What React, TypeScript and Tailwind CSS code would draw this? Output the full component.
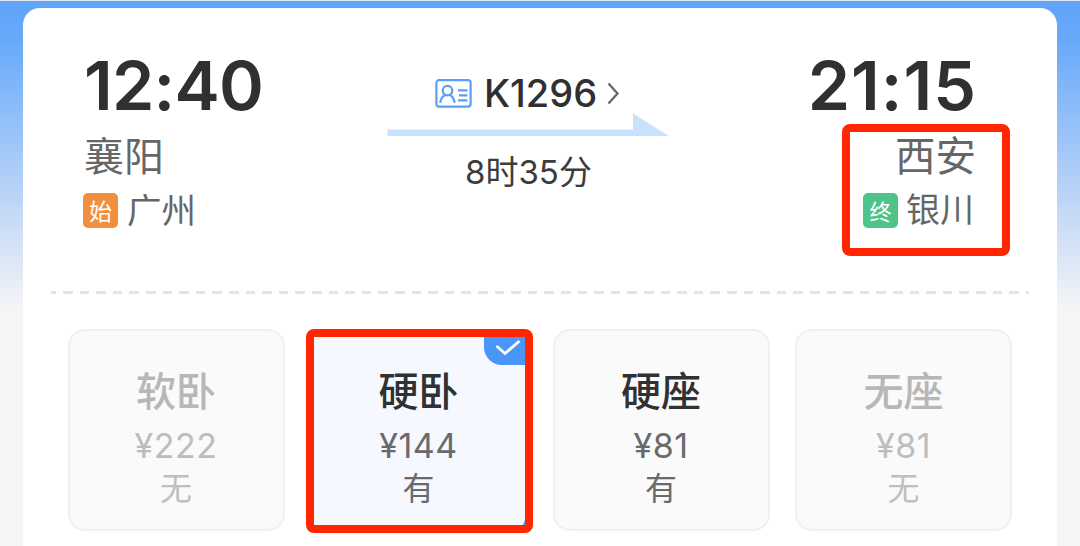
import React from "react";
import clsx from "clsx";

const cjk = "font-['Noto_Sans_CJK_SC',sans-serif]";

type Seat = {
  name: string;
  price: string;
  status: string;
  disabled?: boolean;
  selected?: boolean;
};

const seats: Seat[] = [
  { name: "软卧", price: "¥222", status: "无", disabled: true },
  { name: "硬卧", price: "¥144", status: "有", selected: true },
  { name: "硬座", price: "¥81", status: "有" },
  { name: "无座", price: "¥81", status: "无", disabled: true },
];

const IdCardIcon: React.FC = () => (
  <svg width="37" height="29" viewBox="0 0 37 29" fill="none" stroke="#589ff5" strokeWidth="2.2">
    <rect x="1.4" y="1.2" width="34.2" height="26.4" rx="2.5" />
    <circle cx="12.5" cy="11.6" r="4.8" />
    <path d="M5.2 23.8C5.8 19.5 7.8 17.2 10 16M15 16C17.2 17.2 19 19.5 19.6 23.8" />
    <path d="M23 11.4h9.4M24 16.4h8.4M23 21.4h9.4" />
  </svg>
);

const Arrow: React.FC = () => (
  <svg className="-mt-[2px] shrink-0" width="283" height="24" viewBox="0 0 283 24">
    <path d="M0.5 16.5H246V0.5L282 23H0.5Z" fill="#c8e1fd" />
  </svg>
);

const SeatCard: React.FC<{ seat: Seat }> = ({ seat }) => (
  <div
    className={clsx(
      "relative flex h-[202px] w-[217px] flex-col items-center border-2 pt-[29px]",
      seat.selected
        ? "rounded-[13px] border-[#5ba2f8] bg-[#f5f8ff]"
        : "rounded-[17px] border-[#f0f0f0] bg-[#fafafa]"
    )}
  >
    <div
      className={clsx(
        cjk,
        "h-[58px] text-[40px] leading-[58px] font-medium",
        seat.disabled ? "text-[#b7b7b7]" : "text-[#303133]"
      )}
    >
      {seat.name}
    </div>
    <div
      className={clsx(
        "mt-[6px] h-[44px] text-[34px] leading-[44px] tracking-[0.5px]",
        seat.disabled ? "text-[#bdbdbd]" : "text-[#6a6a6c]"
      )}
    >
      {seat.price}
    </div>
    <div
      className={clsx(
        cjk,
        "-mt-[4px] h-[44px] text-[32px] leading-[44px]",
        seat.disabled ? "text-[#bfbfbf]" : "text-[#6a6a6c]"
      )}
    >
      {seat.status}
    </div>

    {seat.selected && (
      <>
        <div className="absolute top-0 right-0 h-[34px] w-[41px] rounded-bl-[18px] bg-[#4a96f8]">
          <svg className="absolute top-[8px] left-[11px]" width="26" height="17" viewBox="0 0 26 17" fill="none">
            <path d="M1.5 7L10 14.5L24.5 2" stroke="#fff" strokeWidth="2.8" />
          </svg>
        </div>
        {/* red marker */}
        <div className="absolute -top-[2px] -left-[6px] h-[204px] w-[227px] rounded-[8px] border-8 border-[#ff2600]" />
      </>
    )}
  </div>
);

const App: React.FC = () => {
  return (
    <main className="h-[546px] w-[1080px] overflow-hidden border-t border-[#dfeaf7] bg-[linear-gradient(to_bottom,#5fa4fa_0px,#68aafa_40px,#8dbdf9_110px,#b8d3f7_190px,#dde7f6_260px,#f5f5f6_310px,#f5f5f5_546px)] font-['Inter',sans-serif]">
      <section className="mx-[23px] mt-[7px] h-[538px] rounded-t-[17px] bg-white">
        <header className="flex h-[282px] justify-between px-[60px] pt-[43px]">
          <div className="w-[250px]">
            <div className="h-[69px] pl-px text-[68px] leading-[69px] font-semibold tracking-[-0.8px] text-[#303030]">
              12:40
            </div>
            <div className={clsx(cjk, "mt-[8px] h-[52px] pl-px text-[40px] leading-[52px] text-[#666]")}>襄阳</div>
            <div className="mt-px flex h-[50px] items-center">
              <span className={clsx(cjk, "mt-[9px] flex size-[35px] items-center justify-center rounded-[5px] bg-[#f28f3f] text-[23px] leading-[35px] text-white")}>
                始
              </span>
              <span className={clsx(cjk, "mt-[3px] ml-[9px] text-[34.5px] leading-[50px] text-[#666]")}>广州</span>
            </div>
          </div>

          <div className="-ml-[13px] flex w-[283px] flex-col items-center pt-[20px]">
            <div className="flex h-[44px] items-center pr-[2px]">
              <IdCardIcon />
              <span className="ml-[12px] text-[38px] leading-[44px] font-medium text-[#303030]">K1296</span>
              <svg className="ml-[10px]" width="13" height="23" viewBox="0 0 13 23" fill="none">
                <path d="M1.5 1.5L10.5 11.5L1.5 21.5" stroke="#666" strokeWidth="2.3" />
              </svg>
            </div>
            <Arrow />
            <div className="mt-[11px] text-[33px] leading-[44px] whitespace-nowrap text-[#3c3c3c]">
              8<span className={cjk}>时</span>35<span className={cjk}>分</span>
            </div>
          </div>

          <div className="relative flex w-[260px] flex-col items-end pr-[21px]">
            <div className="-mr-px h-[69px] text-[68px] leading-[69px] font-semibold tracking-[1px] text-[#303030]">
              21:15
            </div>
            <div className={clsx(cjk, "mt-[8px] h-[52px] text-[40.5px] leading-[52px] text-[#666]")}>西安</div>
            <div className="mt-px mr-[2px] flex h-[50px] items-center">
              <span className={clsx(cjk, "mt-[9px] flex size-[35px] items-center justify-center rounded-[5px] bg-[#4fc48a] text-[22px] leading-[35px] text-white")}>
                终
              </span>
              <span className={clsx(cjk, "mt-[3px] ml-[8px] text-[34px] leading-[50px] text-[#666]")}>银川</span>
            </div>
            {/* red marker */}
            <div className="absolute top-[73px] -right-[13px] h-[132px] w-[168px] rounded-[8px] border-8 border-[#ff2600]" />
          </div>
        </header>

        <div className="mx-[28px] mt-[1px] h-[3px] bg-[repeating-linear-gradient(to_right,#e4e4e4_0px,#e4e4e4_5px,transparent_5px,transparent_12px,#e4e4e4_12px,#e4e4e4_16.6px)]" />

        <div className="mt-[35px] flex gap-[25.5px] pl-[44.5px]">
          {seats.map((seat, i) => (
            <SeatCard key={i} seat={seat} />
          ))}
        </div>
      </section>
    </main>
  );
};

export default App;
